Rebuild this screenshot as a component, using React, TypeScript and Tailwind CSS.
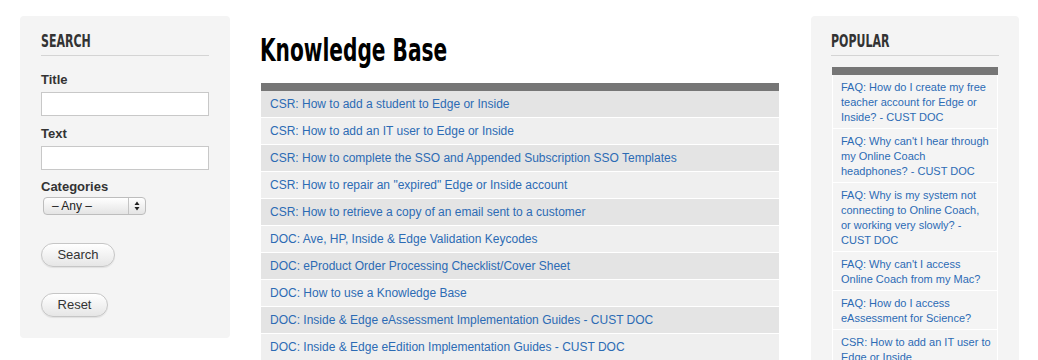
// Knowledge base listing page: search sidebar, article table, popular list

const articles = [
  'CSR: How to add a student to Edge or Inside',
  'CSR: How to add an IT user to Edge or Inside',
  'CSR: How to complete the SSO and Appended Subscription SSO Templates',
  'CSR: How to repair an "expired" Edge or Inside account',
  'CSR: How to retrieve a copy of an email sent to a customer',
  'DOC: Ave, HP, Inside & Edge Validation Keycodes',
  'DOC: eProduct Order Processing Checklist/Cover Sheet',
  'DOC: How to use a Knowledge Base',
  'DOC: Inside & Edge eAssessment Implementation Guides - CUST DOC',
  'DOC: Inside & Edge eEdition Implementation Guides - CUST DOC',
  'DOC: Inside & Edge Online Coach Implementation Guides - CUST DOC',
];

const popular = [
  'FAQ: How do I create my free teacher account for Edge or Inside? - CUST DOC',
  "FAQ: Why can't I hear through my Online Coach headphones? - CUST DOC",
  'FAQ: Why is my system not connecting to Online Coach, or working very slowly? - CUST DOC',
  "FAQ: Why can't I access Online Coach from my Mac?",
  'FAQ: How do I access eAssessment for Science?',
  'CSR: How to add an IT user to Edge or Inside',
  'CSR: How to add a student to Edge or Inside',
];

function PanelHeading({ children }: { children: string }) {
  return (
    <div className="border-b border-[#d4d4d4] pb-[1px]">
      <span className="inline-block origin-left scale-x-[0.68] font-['DejaVu_Sans_Condensed',sans-serif] text-[18px] font-bold leading-[22px] text-[#333]">
        {children}
      </span>
    </div>
  );
}

function PillButton({ label, width }: { label: string; width: string }) {
  return (
    <button
      type="button"
      className={`${width} h-[24px] rounded-full border border-[#c6c6c6] bg-gradient-to-b from-white to-[#e6e6e6] text-[13px] text-[#333] shadow-[0_1px_1px_rgba(0,0,0,0.08)]`}
    >
      {label}
    </button>
  );
}

export default function App() {
  return (
    <div className="h-[360px] overflow-hidden bg-white font-['Liberation_Sans',Arial,sans-serif]">
      <div className="flex items-start pl-[20px] pt-[16px]">
        {/* Search sidebar */}
        <aside className="w-[210px] shrink-0 rounded-[4px] bg-[#f4f4f4] px-[21px] pb-[21px] pt-[14px]">
          <PanelHeading>SEARCH</PanelHeading>

          <label className="mt-[16px] block text-[13px] font-bold leading-[16px] text-[#333]">Title</label>
          <input className="mt-[4px] block h-[24px] w-[168px] border border-[#c8c8c8] bg-white" />

          <label className="mt-[10px] block text-[13px] font-bold leading-[16px] text-[#333]">Text</label>
          <input className="mt-[4px] block h-[24px] w-[168px] border border-[#c8c8c8] bg-white" />

          <label className="mt-[9px] block text-[13px] font-bold leading-[16px] text-[#333]">Categories</label>
          <div className="ml-[2px] mt-[2px] flex h-[18px] w-[103px] items-center rounded-[4px] border border-[#bdbdbd] bg-gradient-to-b from-white to-[#e4e4e4] text-[12px] text-[#222]">
            <span className="flex-1 pl-[8px] leading-[16px]">– Any –</span>
            <span className="flex h-full w-[17px] flex-col items-center justify-center border-l border-[#c4c4c4]">
              <svg width="6" height="10" viewBox="0 0 6 10">
                <path d="M3 0.5 L5.5 4 L0.5 4 Z" fill="#222" />
                <path d="M3 9.5 L5.5 6 L0.5 6 Z" fill="#222" />
              </svg>
            </span>
          </div>

          <div className="mt-[27px]">
            <PillButton label="Search" width="w-[74px]" />
          </div>
          <div className="mt-[25px]">
            <PillButton label="Reset" width="w-[67px]" />
          </div>
        </aside>

        {/* Main listing */}
        <main className="ml-[30px] w-[520px] shrink-0">
          <h1 className="flex h-[51px] items-end">
            <span className="inline-block origin-left scale-x-[0.70] font-['DejaVu_Sans_Condensed',sans-serif] text-[32px] font-bold leading-[34px] text-black">
              Knowledge Base
            </span>
          </h1>
          <div className="ml-[1px] mt-[16px] w-[518px]">
            <div className="h-[8px] bg-[#767676]" />
            {articles.map((title, i) => (
              <div
                key={i}
                className={`border-b border-white pl-[9px] pt-[1px] text-[12px] leading-[25px] ${
                  i % 2 === 0 ? 'bg-[#e4e4e4]' : 'bg-[#efefef]'
                }`}
              >
                <a className="text-[#2c6bb4]">{title}</a>
              </div>
            ))}
          </div>
        </main>

        {/* Popular sidebar */}
        <aside className="ml-[31px] h-[360px] w-[208px] shrink-0 rounded-[4px] bg-[#f4f4f4] px-[20px] pt-[14px]">
          <PanelHeading>POPULAR</PanelHeading>
          <div className="ml-[1px] mt-[11px] w-[166px]">
            <div className="h-[8px] bg-[#767676]" />
            <ul className="border-x border-white">
              {popular.map((title, i) => (
                <li key={i} className="border-b border-white pb-[3px] pl-[8px] pr-[6px] pt-[5px] text-[11px] leading-[15px]">
                  <a className="text-[#2c6bb4]">{title}</a>
                </li>
              ))}
            </ul>
          </div>
        </aside>
      </div>
    </div>
  );
}
